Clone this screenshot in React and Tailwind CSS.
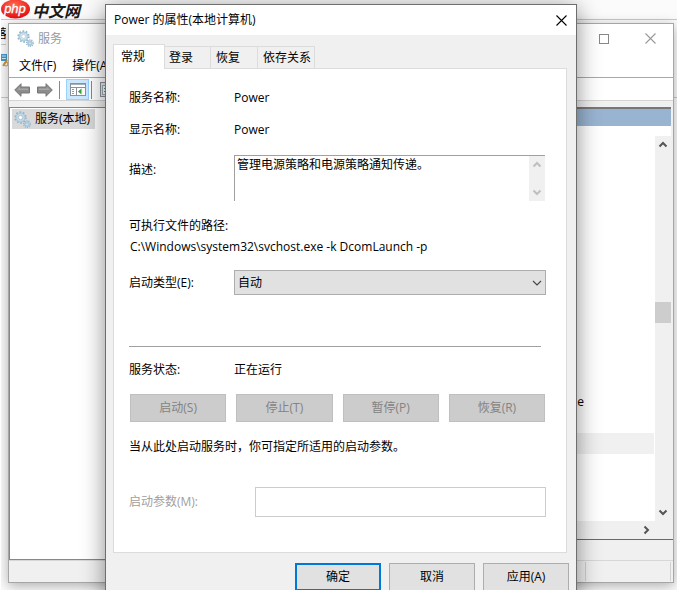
import React, { useState } from 'react';

const TABS = ['常规', '登录', '恢复', '依存关系'];

function Gear({ cx, cy, r }) {
    const c = 2 * Math.PI * (r + 0.8);
    return (
        <g fill="none">
            <circle cx={cx} cy={cy} r={r + 0.8} stroke="#8fb4cc" strokeWidth="1.6" strokeDasharray={`${c / 20} ${c / 20}`} />
            <circle cx={cx} cy={cy} r={r - 0.8} stroke="#bcd8e8" strokeWidth="2" />
            <circle cx={cx} cy={cy} r={r} stroke="#8fb0c6" strokeWidth="0.5" />
            <circle cx={cx} cy={cy} r={r / 2.2} stroke="#8fb0c6" strokeWidth="0.6" fill="#fff" />
        </g>
    );
}

function GearsIcon() {
    return (
        <svg className="h-[17px] w-[17px] shrink-0" viewBox="0 0 17 17" aria-hidden="true">
            <Gear cx={6.5} cy={6.5} r={4.6} />
            <Gear cx={13} cy={13.2} r={2.4} />
        </svg>
    );
}

function ArrowIcon({ flip }) {
    return (
        <svg className="h-4 w-4" viewBox="0 0 16 16" aria-hidden="true">
            <path
                d="M0.7 8 L7 1.7 V5 H15.5 V11 H7 V14.3 Z"
                fill="#8c8c8c"
                stroke="#777"
                transform={flip ? 'translate(16 0) scale(-1 1)' : undefined}
            />
            <path d="M3 8 L6 5 V6.5 H14 V8" fill="#a6a6a6" transform={flip ? 'translate(16 0) scale(-1 1)' : undefined} />
        </svg>
    );
}

function PanelIcon() {
    return (
        <svg className="h-[13px] w-4" viewBox="0 0 16 13" aria-hidden="true" shapeRendering="crispEdges">
            <rect x="0.5" y="0.5" width="15" height="12" fill="#fff" stroke="#8a929c" />
            <path d="M1 1.5H15" stroke="#a9b1ba" />
            <path d="M1 4.5H15M6.5 4V13" stroke="#8a929c" />
            <path d="M2 6.5H4M2 8.5H4M2 10.5H4" stroke="#6fa3d0" />
            <path d="M11.5 5.5V11.5L8 8.5Z" fill="#2fa52f" shapeRendering="auto" />
        </svg>
    );
}

function PropsIcon() {
    return (
        <svg className="h-[15px] w-4" viewBox="0 0 16 15" aria-hidden="true" shapeRendering="crispEdges">
            <rect x="0.5" y="0.5" width="15" height="14" fill="#e9ecef" stroke="#8a929c" />
            <rect x="2.5" y="3.5" width="11" height="9" fill="#fff" stroke="#a9b1ba" />
            <path d="M4 6.5H6M4 9.5H6" stroke="#4a9a8a" />
            <path d="M7 6.5H12M7 9.5H12" stroke="#8a929c" />
        </svg>
    );
}

const CHEVRONS = {
    up: 'M1.5 6.5 L5 3 L8.5 6.5',
    down: 'M1.5 3.5 L5 7 L8.5 3.5',
    right: 'M3.5 1.5 L7 5 L3.5 8.5',
};

function Chevron({ dir, className }) {
    return (
        <svg className={`h-[10px] w-[10px] ${className}`} viewBox="0 0 10 10" aria-hidden="true">
            <path d={CHEVRONS[dir]} fill="none" stroke="currentColor" strokeWidth="2" />
        </svg>
    );
}

function CloseIcon() {
    return (
        <svg className="h-[11px] w-[11px]" viewBox="0 0 11 11" aria-hidden="true">
            <path d="M0.5 0.5 L10.5 10.5 M10.5 0.5 L0.5 10.5" stroke="currentColor" strokeWidth="1.1" />
        </svg>
    );
}

// Site logo and the browser page that sits behind the windows
function Backdrop() {
    return (
        <div className="h-full bg-[#fbfbfb]">
            <div className="flex h-5 items-center gap-px border-b border-[#c8c8c8]">
                <svg className="h-[19px] w-[30px] shrink-0" viewBox="0 0 30 19" role="img" aria-label="php">
                    <defs>
                        <radialGradient id="red" cx="0.45" cy="0.3" r="0.7">
                            <stop offset="0" stopColor="#ff6a50" />
                            <stop offset="1" stopColor="#e60d10" />
                        </radialGradient>
                    </defs>
                    <ellipse cx="14.5" cy="9" rx="14.5" ry="9.5" fill="url(#red)" />
                    <text x="14" y="13" textAnchor="middle" fontSize="13" fontStyle="italic" fill="#fff" stroke="#fff" strokeWidth="0.3" fontFamily="Liberation Sans, sans-serif">php</text>
                </svg>
                <span className="font-['Noto_Sans_CJK_SC',sans-serif] text-[16px] leading-5 font-bold italic text-[#1a1a1a]">中文网</span>
            </div>
            <div className="h-[25px] w-[5px] overflow-hidden border-b border-[#c8c8c8] pt-1">
                <span className="-ml-[6px] block w-3 text-[12px] leading-5">落</span>
            </div>
            <div className="h-[53px] border-b border-[#c8c8c8] pt-2">
                <svg className="h-4 w-2" viewBox="0 0 8 16" aria-hidden="true">
                    <path d="M0 1H6V8H0Z" fill="#3f9bd0" />
                    <path d="M1 3H5M1 5.5H5" stroke="#d7effb" />
                    <path d="M2 13L6 7" stroke="#c9993a" strokeWidth="2" />
                    <circle cx="5" cy="11" r="2" fill="none" stroke="#c9993a" />
                </svg>
            </div>
        </div>
    );
}

function ServicesWindow() {
    return (
        <section className="absolute top-[23px] right-[3px] bottom-[7px] left-[7px] flex flex-col border border-[#a6a6a6] bg-[#f0f0f0] shadow-[0_3px_12px_rgba(0,0,0,0.3)]">
            <header className="flex h-[29px] shrink-0 items-center bg-white pl-2 text-[#999]">
                <GearsIcon />
                <h1 className="ml-1 flex-1">服务</h1>
                <button aria-label="最大化" className="flex h-full w-[46px] items-center justify-center">
                    <span className="h-[10px] w-[10px] border border-[#888]" />
                </button>
                <button aria-label="关闭" className="flex h-full w-[46px] items-center justify-center">
                    <CloseIcon />
                </button>
            </header>
            <nav className="flex h-[25px] shrink-0 items-center gap-4 border-b border-[#a8a8a8] bg-white pt-[2px] pl-[10px]">
                <button>文件(F)</button>
                <button>操作(A)</button>
            </nav>
            <div className="flex h-[23px] shrink-0 items-center border-b border-[#d4d4d4] bg-white pt-px pl-[5px]">
                <button aria-label="后退"><ArrowIcon /></button>
                <button aria-label="前进" className="ml-[7px]"><ArrowIcon flip /></button>
                <span className="mx-[6px] h-[18px] w-px bg-[#888]" />
                <button aria-label="显示控制台树" className="flex h-[21px] w-[23px] items-center justify-center border border-[#99d1ff] bg-[#cce8ff]">
                    <PanelIcon />
                </button>
                <span className="mr-2 ml-[2px] h-[18px] w-px bg-[#888]" />
                <button aria-label="属性"><PropsIcon /></button>
            </div>

            <div className="mt-[6px] flex min-h-0 flex-1">
                <div className="w-[200px] shrink-0 border border-[#828790] bg-white pt-px pl-[2px]">
                    <div className="flex h-5 w-[83px] items-center gap-1 bg-[#d9d9d9] pl-[2px]">
                        <GearsIcon />
                        <span className="whitespace-nowrap">服务(本地)</span>
                    </div>
                </div>
                <div className="flex min-w-0 flex-1 flex-col">
                    <div className="mr-[2px] flex min-h-0 flex-1 flex-col border-t-2 border-[#777] bg-white">
                        <div className="h-[17px] shrink-0 bg-[#99b4d1]" />
                        <div className="flex min-h-0 flex-1">
                            <div className="flex-1 pt-[266px]">
                                <div className="h-5 pr-[71px] text-right leading-5">e</div>
                                <div className="mt-[21px] mr-px h-[21px] bg-[#f0f0f0]" />
                            </div>
                            <div className="mt-[10px] flex w-4 flex-col items-center bg-[#f0f0f0] text-[#555]">
                                <Chevron dir="up" className="mt-1" />
                                <div className="mt-[152px] h-[21px] w-4 bg-[#cdcdcd]" />
                                <Chevron dir="down" className="mt-auto mb-1" />
                            </div>
                        </div>
                        <div className="flex h-[17px] shrink-0 items-center justify-end bg-[#f0f0f0] pr-5 text-[#555]">
                            <Chevron dir="right" className="" />
                        </div>
                    </div>
                    <div className="mt-px h-[21px] shrink-0 border-t border-[#696969]" />
                </div>
            </div>
            <footer className="flex h-[22px] shrink-0 justify-end border-t border-[#d7d7d7] py-px pr-[2px]">
                <div className="w-[86px] border-x border-[#d0d0d0]" />
            </footer>
        </section>
    );
}

function Field({ label, children }) {
    return (
        <div className="flex leading-5">
            <dt className="w-[105px] shrink-0">{label}</dt>
            <dd>{children}</dd>
        </div>
    );
}

function ActionButton({ children }) {
    return (
        <button disabled className="h-7 flex-1 border border-[#bfbfbf] bg-[#ccc] text-[#838383]">
            {children}
        </button>
    );
}

function GeneralTab() {
    const [startup, setStartup] = useState('auto');

    return (
        <div className="border border-[#dcdcdc] bg-white pt-[19px] pr-5 pb-[35px] pl-[15px]">
            <dl className="flex flex-col gap-3">
                <Field label="服务名称:">Power</Field>
                <Field label="显示名称:">Power</Field>
            </dl>

            <div className="mt-[15px] flex pr-px">
                <label htmlFor="desc" className="w-[105px] shrink-0 pt-[5px] leading-5">描述:</label>
                <div className="flex h-[46px] flex-1 border-t border-l border-[#a0a0a0]">
                    <textarea
                        id="desc"
                        readOnly
                        className="min-w-0 flex-1 resize-none overflow-hidden px-[2px] leading-[18px] outline-none"
                        value="管理电源策略和电源策略通知传递。"
                    />
                    <div className="flex w-4 flex-col items-center justify-between bg-[#f0f0f0] py-1 text-[#bfbfbf]">
                        <Chevron dir="up" className="" />
                        <Chevron dir="down" className="" />
                    </div>
                </div>
            </div>

            <div className="mt-[15px] leading-5">可执行文件的路径:</div>
            <div className="pt-px pl-px leading-5">C:\Windows\system32\svchost.exe -k DcomLaunch -p</div>

            <div className="mt-[13px] flex items-center">
                <label htmlFor="startup" className="w-[105px] shrink-0">启动类型(E):</label>
                <div className="relative flex-1">
                    <select
                        id="startup"
                        value={startup}
                        onChange={(e) => setStartup(e.target.value)}
                        className="block h-[25px] w-full appearance-none border border-[#adadad] bg-[#e1e1e1] px-[3px] outline-none"
                    >
                        <option value="auto">自动</option>
                        <option value="manual">手动</option>
                        <option value="disabled">禁用</option>
                    </select>
                    <svg className="pointer-events-none absolute top-2 right-1 h-[10px] w-[10px]" viewBox="0 0 10 10" aria-hidden="true">
                        <path d="M1 3 L5 7 L9 3" fill="none" stroke="#444" strokeWidth="1.1" />
                    </svg>
                </div>
            </div>

            <hr className="mt-[51px] mr-[5px] border-[#a0a0a0]" />

            <dl className="mt-[13px]">
                <Field label="服务状态:">正在运行</Field>
            </dl>

            <div className="mt-[14px] flex gap-[10px] px-px">
                <ActionButton>启动(S)</ActionButton>
                <ActionButton>停止(T)</ActionButton>
                <ActionButton>暂停(P)</ActionButton>
                <ActionButton>恢复(R)</ActionButton>
            </div>

            <p className="mt-[15px] leading-5">当从此处启动服务时，你可指定所适用的启动参数。</p>

            <div className="mt-[30px] flex items-center">
                <label htmlFor="params" className="w-[126px] shrink-0 text-[#a0a0a0]">启动参数(M):</label>
                <input id="params" disabled className="h-[30px] min-w-0 flex-1 border border-[#ccc] bg-white px-1" />
            </div>
        </div>
    );
}

function PropertiesDialog() {
    const [tab, setTab] = useState('常规');

    return (
        <section role="dialog" aria-label="Power 的属性" className="absolute top-1 right-[100px] left-[104px] border border-[#6e6e6e] bg-[#f0f0f0] shadow-[0_4px_22px_rgba(0,0,0,0.45)]">
            <header className="flex h-[30px] items-center justify-between bg-white pr-[9px] pl-2">
                <h2>Power 的属性(本地计算机)</h2>
                <button aria-label="关闭"><CloseIcon /></button>
            </header>
            <div className="pt-[9px] pr-[9px] pb-[10px] pl-[7px]">
                <div role="tablist" className="-mb-px flex items-end">
                    {TABS.map((t) => (
                        <button
                            key={t}
                            role="tab"
                            aria-selected={t === tab}
                            onClick={() => setTab(t)}
                            className={
                                t === tab
                                    ? 'relative h-[25px] w-[52px] border border-b-0 border-[#dcdcdc] bg-white pl-[7px] text-left'
                                    : 'h-[23px] border border-l-0 border-[#dcdcdc] pr-[17px] pl-1 text-left last:pr-[3px] nth-[n+3]:pl-[5px]'
                            }
                        >
                            {t}
                        </button>
                    ))}
                </div>
                <GeneralTab />
                <div className="-mr-[2px] mt-[10px] flex justify-end gap-2">
                    <button className="h-7 w-[86px] border-2 border-[#0078d7] bg-[#e1e1e1]">确定</button>
                    <button className="h-7 w-[86px] border border-[#adadad] bg-[#e1e1e1]">取消</button>
                    <button className="h-7 w-[86px] border border-[#adadad] bg-[#e1e1e1]">应用(A)</button>
                </div>
            </div>
        </section>
    );
}

export default function App() {
    return (
        <main className="h-screen bg-white pb-[3px] pl-px font-['Open_Sans','Noto_Sans_CJK_SC',sans-serif] text-[12px] text-black">
            <div className="relative h-full overflow-hidden">
                <Backdrop />
                <ServicesWindow />
                <PropertiesDialog />
            </div>
        </main>
    );
}
